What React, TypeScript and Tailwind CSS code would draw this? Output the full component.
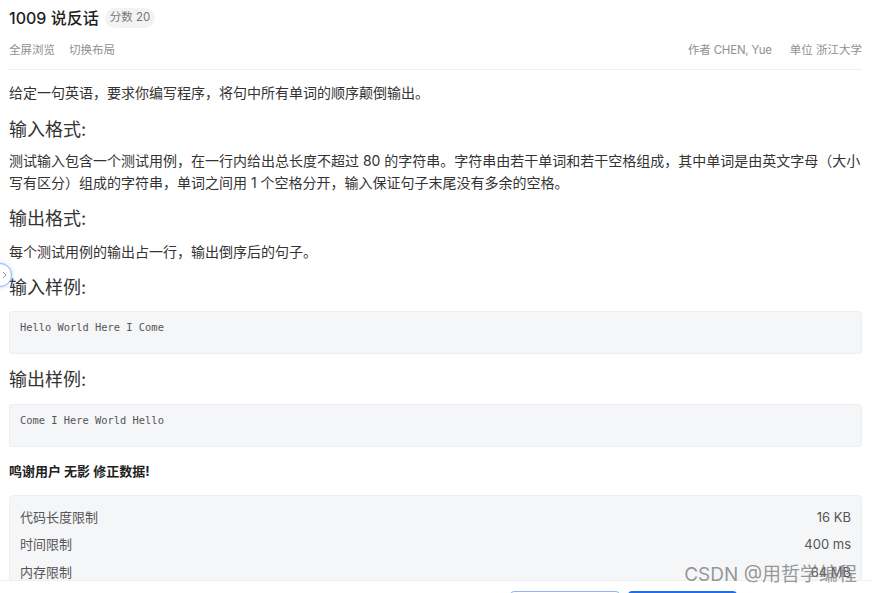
import React from 'react';

const cn = '[font-family:Inter,"Noto_Sans_CJK_SC",sans-serif]';

const Heading = ({ children, className = '' }: { children: React.ReactNode; className?: string }) => (
  <h3 className={`text-[18px] leading-[26px] text-[#333] font-normal ${className}`}>{children}</h3>
);

const Sample = ({ text, className = '' }: { text: string; className?: string }) => (
  <pre
    className={`h-[43px] rounded-[3px] border border-[#eceef1] bg-[#f5f6f8] px-[10px] pt-[8px] text-[10.4px] leading-[14px] text-[#555] [font-family:"DejaVu_Sans_Mono",monospace] ${className}`}
  >
    {text}
  </pre>
);

const limits = [
  { label: '代码长度限制', value: '16 KB' },
  { label: '时间限制', value: '400 ms' },
  { label: '内存限制', value: '64 MB' },
];

export default function App() {
  return (
    <div className={`relative h-[593px] w-full overflow-hidden bg-white ${cn}`}>
      <div className="px-[9px] pr-[10px]">
        {/* title */}
        <div className="mt-[8px] flex h-[20px] items-center">
          <h1 className="text-[16px] font-medium text-[#1f1f1f]">1009 说反话</h1>
          <span className="ml-[6px] flex h-[20px] items-center rounded-full bg-[#f2f3f5] px-[5px] text-[11.5px] text-[#777]">
            分数 20
          </span>
        </div>

        {/* meta row */}
        <div className="mt-[15px] flex h-[16px] items-center text-[11.5px] text-[#909090]">
          <div className="flex gap-[14px]">
            <span>全屏浏览</span>
            <span>切换布局</span>
          </div>
          <div className="ml-auto flex gap-[18px]">
            <span className="tracking-[-0.2px]">作者 CHEN, Yue</span>
            <span>单位 浙江大学</span>
          </div>
        </div>
        <div className="mt-[10px] border-b border-[#eeeff1]" />

        {/* body */}
        <div className="text-[14px] leading-[22px] text-[#333]">
          <p className="mt-[12px]">给定一句英语，要求你编写程序，将句中所有单词的顺序颠倒输出。</p>
          <Heading className="mt-[13px]">输入格式:</Heading>
          <p className="mt-[7px]">
            测试输入包含一个测试用例，在一行内给出总长度不超过 80 的字符串。字符串由若干单词和若干空格组成，其中单词是由英文字母（大小写有区分）组成的字符串，单词之间用 1 个空格分开，输入保证句子末尾没有多余的空格。
          </p>
          <Heading className="mt-[12px]">输出格式:</Heading>
          <p className="mt-[9px]">每个测试用例的输出占一行，输出倒序后的句子。</p>
          <Heading className="mt-[12px]">输入样例:</Heading>
          <Sample className="mt-[10px]" text="Hello World Here I Come" />
          <Heading className="mt-[13px]">输出样例:</Heading>
          <Sample className="mt-[11px]" text="Come I Here World Hello" />
          <p className="mt-[14px] text-[13px] leading-[20px] font-bold text-[#222]">鸣谢用户 无影 修正数据!</p>

          <div className="mt-[14px] rounded-[4px] border border-[#eceef1] bg-[#f5f6f8] px-[10px] pt-[7px] pb-[8px]">
            {limits.map((l) => (
              <div key={l.label} className="flex h-[27.5px] items-center text-[13px] text-[#555]">
                <span>{l.label}</span>
                <span className="ml-auto">{l.value}</span>
              </div>
            ))}
          </div>
        </div>
      </div>

      {/* side toggle */}
      <button className="absolute left-[-12px] top-[263px] flex h-[24px] w-[24px] items-center justify-center rounded-full border border-[#8fb4f5] bg-white shadow-[0_0_4px_rgba(60,120,240,0.35)]">
        <svg width="8" height="8" viewBox="0 0 8 8" className="ml-[10px]">
          <path d="M2 1l3 3-3 3" fill="none" stroke="#999" strokeWidth="1" />
        </svg>
      </button>

      {/* bottom action bar */}
      <div className="absolute bottom-0 left-0 right-0 h-[13px] border-t border-[#eeeff1] bg-white">
        <div className="absolute left-[510px] top-[10px] h-[20px] w-[110px] rounded-[4px] border border-[#8fb4f5] bg-white" />
        <div className="absolute left-[628px] top-[10px] h-[20px] w-[109px] rounded-[4px] bg-[#1f6fea]" />
      </div>

      {/* watermark */}
      <div className="pointer-events-none absolute right-[15px] top-[562px] text-[19px] leading-[26px] text-[#7d7d7d]/80">
        CSDN @用哲学编程
      </div>
    </div>
  );
}
